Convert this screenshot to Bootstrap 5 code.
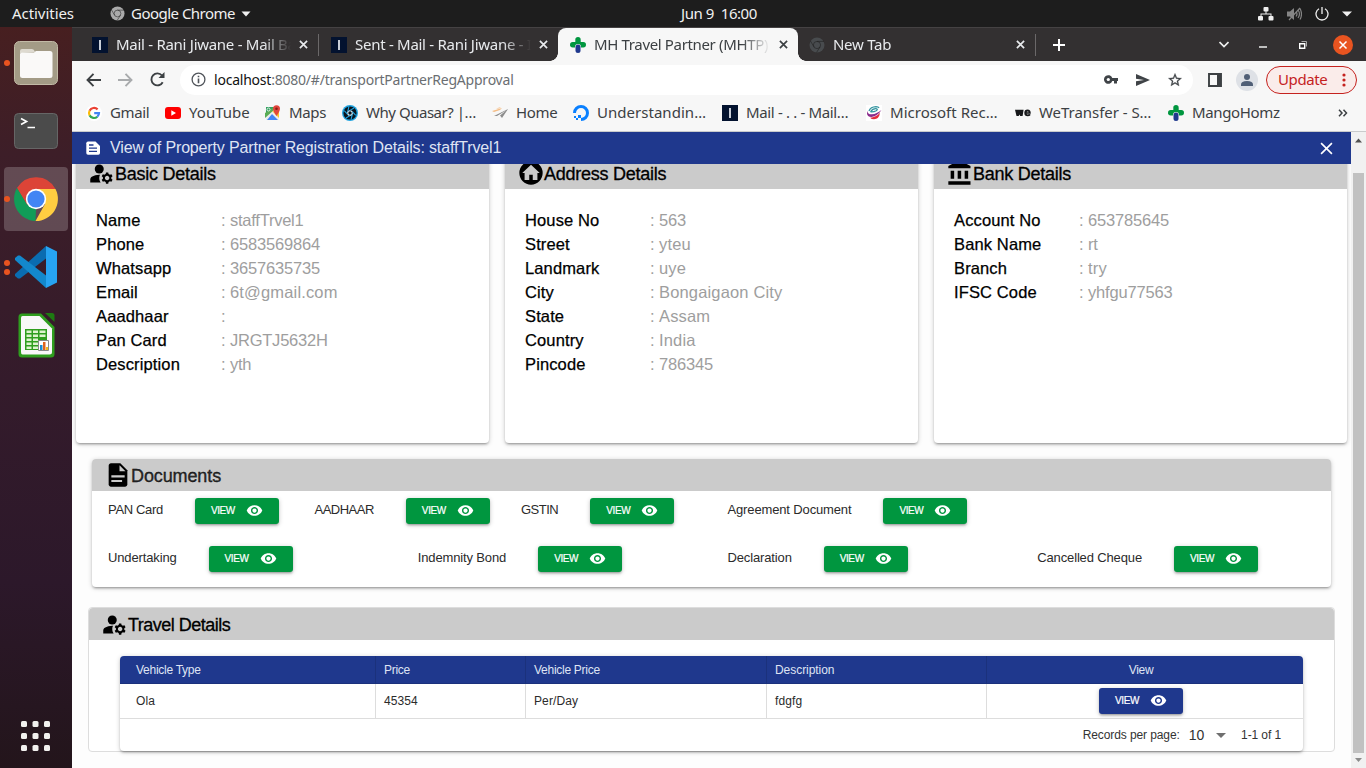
<!DOCTYPE html>
<html lang="en">
<head>
<meta charset="utf-8">
<meta name="viewport" content="width=device-width, initial-scale=1">
<title>MH Travel Partner (MHTP)</title>
<link href="https://cdn.jsdelivr.net/npm/bootstrap@5.3.0/dist/css/bootstrap.min.css" rel="stylesheet">
<style>
:root{--navy:#1f388d;--leaf:#00963f;--shade:#cbcbcb}
body{height:768px;overflow:hidden;background:#fff;font-family:"Liberation Sans",Arial,sans-serif;color:#000}
svg{display:block;flex:none}
.shell-font{font-family:"Noto Sans","Open Sans",sans-serif}
/* desktop bar */
.desk-bar{height:27px;background:#1d1d1d;color:#f0f0f0;font-size:15px;line-height:27px;display:grid;grid-template-columns:98px 583px 1fr auto;padding-left:12px}
.desk-bar>div:nth-child(1){letter-spacing:-.05px}
.desk-bar>div:nth-child(2){letter-spacing:-.52px}
.clock{letter-spacing:-.45px;white-space:pre;margin-left:-12px}
.tray{gap:13px;padding-right:14px}
/* dock */
.dock{width:72px;background:linear-gradient(#471f20 0,#3d1e28 17%,#341b2b 48%,#2c182a 75%,#23151b 100%);padding:4px 4px 0}
.dock-item{width:64px;height:64px;margin-bottom:4px;position:relative;border-radius:4px}
.dock-item.running{background:rgba(255,255,255,.2)}
.dots{position:absolute;left:0;top:0;height:64px;gap:3px}
.dots i{display:block;width:6px;height:6px;border-radius:50%;background:#e95420}
/* browser chrome */
.tab-strip{height:34px;background:#333031;border-top:1px solid #454243;color:#e8eaed;font-size:15px;padding-left:8px}
.b-tab{width:239px;height:33px;padding:0 6px 0 12px;position:relative}
.b-tab .ttl{width:176px;white-space:nowrap;overflow:hidden;-webkit-mask-image:linear-gradient(90deg,#000 84%,transparent 100%);mask-image:linear-gradient(90deg,#000 84%,transparent 100%);letter-spacing:-.28px}
.b-tab.current{background:#f7f7f7;color:#3c4043;border-radius:8px 8px 0 0;width:240px;margin-right:-1px}
.b-tab.current:before,.b-tab.current:after{content:"";position:absolute;bottom:0;width:8px;height:8px}
.b-tab.current:before{left:-8px;background:radial-gradient(circle at 0 0,transparent 7.5px,#f7f7f7 8px)}
.b-tab.current:after{right:-8px;background:radial-gradient(circle at 100% 0,transparent 7.5px,#f7f7f7 8px)}
.b-tab.current .ttl{letter-spacing:-.35px}
.divided{border-right:1px solid #5f5c5d;border-image:linear-gradient(transparent 7px,#6b6869 7px,#6b6869 27px,transparent 27px) 1}
.win-ctl{padding-right:13px}
.toolbar{height:37px;background:#f7f7f7;padding-left:14px}
.omni{width:1013px;height:30px;border-radius:15px;background:#fff;font-size:14px;color:#6a6e72;letter-spacing:-.22px;padding:0 7px 0 11px;margin-left:15px}
.omni b{font-weight:400;color:#111}
.upd{width:91px;height:28px;border:1px solid #c5221f;border-radius:14px;background:#faecea;color:#c5221f;font-size:15px;letter-spacing:-.4px;margin-left:8px;padding-left:11px}
.marks{height:34px;background:#f7f7f7;border-bottom:1px solid #c9cbcc;color:#3c4043;font-size:15px;display:grid;padding:0 0 4px 14px;grid-template-columns:79px 100px 77px 150px 81px 149px 144px 149px 153px 165px auto;align-items:center;white-space:nowrap}
.marks>div{display:flex;align-items:center;gap:8px;letter-spacing:-.35px}
.marks svg{margin-top:1px}
.marks .wide{letter-spacing:.03px}
/* dialog page */
.page{width:1279px}
.dlg-bar{height:32px;background:var(--navy);color:#dfe4f3;font-size:16px;padding:0 18px 0 13px}
.dlg-bar .ttl{letter-spacing:-.15px;margin-left:9px}
.scroll-body{height:604px;overflow:hidden;background:#fdfdfd}
.panel{background:#fff;border-radius:4px;box-shadow:0 1px 5px rgba(0,0,0,.2),0 2px 2px rgba(0,0,0,.14),0 3px 1px -2px rgba(0,0,0,.12)}
.info{height:286px}
.top-cards{padding:0 4px;gap:16px;margin-top:-7px}
.cap{height:32px;background:var(--shade);border-radius:4px 4px 0 0;padding-left:12px;font-size:18px;letter-spacing:-.25px;-webkit-text-stroke:.3px #000;line-height:32px}
.cap span{margin-left:-1px;padding-top:1px}
.facts{display:grid;grid-template-columns:125px 9px 1fr;font-size:16.5px;line-height:24px;padding:19px 20px 0;margin:0;color:#9e9e9e}
.facts dt{font-weight:400;color:#000;letter-spacing:.13px;-webkit-text-stroke:.25px #000}
.facts dd{margin:0;letter-spacing:-.24px}
.facts .sp{letter-spacing:.16px}
.facts .num{letter-spacing:-.18px}
.docs{margin:16px 20px 0;height:128px;font-size:13px;color:#2b2b2b}
.docs .row{height:48px;padding:7px 0 0}
.docs .row>div{gap:32px;padding:0 0 0 16px;display:flex;white-space:nowrap;letter-spacing:-.14px;line-height:24px}
.docs .tight{letter-spacing:-.5px}
.docs .snug{letter-spacing:-.33px}
.btn.vw{width:84px;height:26px;padding:0 0 0 16px;border:0;border-radius:3px;font-size:10px;line-height:26px;letter-spacing:-.4px;color:#fff;background:var(--leaf);display:flex;align-items:center;-webkit-text-stroke:.2px #fff;box-shadow:0 1px 5px rgba(0,0,0,.2),0 2px 2px rgba(0,0,0,.14),0 3px 1px -2px rgba(0,0,0,.12)}
.btn.vw svg{margin:-1px 0 0 11px}
.btn.vw.navy{background:var(--navy)}
.travel{margin:20px 16px 0;height:145px;border:1px solid #ddd;border-radius:4px;background:#fff}
.travel .cap{letter-spacing:-.5px}
.grid-box{margin:16px 31px 0;height:95px}
.grid-box table{width:100%;table-layout:fixed;border-collapse:separate;border-spacing:0;font-size:12px;color:#2b2b2b}
.grid-box th{height:28px;background:var(--navy);color:#dfe4f3;font-weight:400;padding:0 8px;letter-spacing:-.27px;border-right:1px solid #1b317c;border-bottom:1px solid #1b317c}
.grid-box td{height:35px;padding:0 8px;border-right:1px solid #ddd;border-bottom:1px solid #ddd;letter-spacing:.1px}
.grid-box th:nth-child(4){letter-spacing:-.05px}
.grid-box tr>:first-child{padding-left:16px}
.grid-box tr>:last-child{border-right:0;padding-right:16px}
.grid-box th:first-child{border-radius:4px 0 0 0}
.grid-box th:last-child{border-radius:0 4px 0 0}
.pager{height:32px;font-size:12px;color:#333;padding-right:22px;letter-spacing:-.1px}
.pager .count{font-size:14px;margin-left:9px}
.sbar{width:15px;background:#f1f1f1}
.sbar .thumb{width:11px;height:580px;background:#c1c1c1}
</style>
</head>
<body class="d-flex flex-column">
<svg width="0" height="0" class="position-absolute">
<defs>
<symbol id="eye" viewBox="0 0 24 24"><path d="M12 4.500C7 4.500 2.730 7.610 1 12c1.730 4.390 6 7.500 11 7.500s9.270-3.110 11-7.500c-1.730-4.390-6-7.500-11-7.500zM12 17c-2.760 0-5-2.240-5-5s2.240-5 5-5 5 2.240 5 5-2.240 5-5 5zm0-8c-1.660 0-3 1.340-3 3s1.340 3 3 3 3-1.340 3-3-1.340-3-3-3z"/></symbol>
<symbol id="manage" viewBox="0 0 24 24"><circle cx="10" cy="8" r="4"/><path d="M10.670 13.020C10.450 13.010 10.230 13 10 13c-2.420 0-4.680.670-6.610 1.820C2.510 15.340 2 16.320 2 17.350V20h9.260C10.470 18.870 10 17.490 10 16c0-1.070.250-2.070.670-2.980z"/><path d="M20.750 16c0-.220-.030-.420-.060-.630l1.140-1.010-1-1.730-1.450.490c-.320-.270-.680-.480-1.080-.630L18 11h-2l-.300 1.490c-.400.150-.760.360-1.080.630l-1.450-.490-1 1.730 1.140 1.010c-.030.210-.060.410-.060.630s.030.420.060.630l-1.140 1.010 1 1.730 1.450-.490c.320.270.680.480 1.080.630L16 21h2l.300-1.490c.400-.150.760-.360 1.080-.630l1.450.490 1-1.730-1.140-1.010c.030-.210.060-.410.060-.630zM17 18c-1.100 0-2-.900-2-2s.900-2 2-2 2 .900 2 2-.900 2-2 2z"/></symbol>
<symbol id="home" viewBox="0 0 24 24"><path fill-rule="evenodd" d="M12 2a10 10 0 1 0 0 20 10 10 0 0 0 0-20zM12 5l7.500 7H17.500v6h-4v-4.500h-3V18h-4v-6H4.500z"/></symbol>
<symbol id="bank" viewBox="0 0 24 24"><path d="M4 10v7h3v-7H4zm6 0v7h3v-7h-3zM2 22h19v-3H2v3zm14-12v7h3v-7h-3zm-4.500-9L2 6v2h19V6l-9.500-5z"/></symbol>
<symbol id="file" viewBox="0 0 24 24"><path d="M14 2H6c-1.100 0-2 .900-2 2v16c0 1.100.900 2 2 2h12c1.100 0 2-.900 2-2V8l-6-6z"/><path d="M13.300 3.600V8.700H18.400zM6.300 12.200h11.400v1.900H6.300zM6.300 16.200h9.200v1.900H6.300z" fill="#cbcbcb"/></symbol>
<symbol id="close" viewBox="0 0 10 10"><path d="M1 1l8 8M9 1L1 9" fill="none" stroke="currentColor" stroke-width="1.900"/></symbol>
<symbol id="mango" viewBox="0 0 16 16"><rect x="5.300" y="0" width="5.400" height="9" rx="2.700" fill="#00963f"/><rect x="0" y="5" width="16" height="5.400" rx="2.700" fill="#00963f"/><rect x="5" y="7" width="6" height="9" rx="3" fill="#f7f7f7"/><rect x="5.500" y="7.600" width="5" height="8.400" rx="2.500" fill="#1f388d"/></symbol>
<symbol id="ionos" viewBox="0 0 16 16"><path fill="#03122f" d="M0 0h16v16H0z"/><path fill="#c9ced8" d="M7 3h2v10H7z"/></symbol>
<symbol id="chrome-mono" viewBox="0 0 16 16"><circle cx="8" cy="8" r="7.500" fill="currentColor"/><g fill="none" stroke="#1d1d1d" stroke-opacity=".55" stroke-width="1"><circle cx="8" cy="8" r="3.600"/><path d="M8 4.400h7M4.900 9.800L1.500 4M11.100 9.800L7.600 15.400"/></g></symbol>
</defs>
</svg>

<header class="desk-bar shell-font">
  <div>Activities</div>
  <div class="d-flex align-items-center"><svg width="15" height="15" style="color:#aaa;margin-right:6px"><use href="#chrome-mono"/></svg>Google Chrome<svg width="10" height="6" style="margin-left:6px"><path d="M.5.500h9L5 5.500z" fill="#f0f0f0"/></svg></div>
  <div class="clock">Jun 9  16:00</div>
  <div class="tray d-flex align-items-center">
    <svg width="16" height="14" viewBox="0 0 16 14" fill="#f0f0f0"><rect x="5.500" width="5" height="4.500" rx="1"/><rect y="9" width="5" height="4.500" rx="1"/><rect x="10.500" y="9" width="5" height="4.500" rx="1"/><path d="M7.500 4h1v2.500h5V9h-1V7.500h-9V9h-1V6.500h5z"/></svg>
    <svg width="15" height="14" viewBox="0 0 15 14" fill="#858585"><path d="M0 4.500h3L7 1v12L3 9.500H0z"/><path d="M9 4.500q2 2.500 0 5M11 3q3 4 0 8M13 1.500q3 5.500 0 11M2 13L13 1" fill="none" stroke="#858585" stroke-width="1.200"/></svg>
    <svg width="14" height="14" viewBox="0 0 14 14" fill="none" stroke="#f0f0f0" stroke-width="1.300"><path d="M4 1.800a6 6 0 1 0 6 0M7 0v7"/></svg>
    <svg width="10" height="6"><path d="M0 .5h10L5 5.500z" fill="#f0f0f0"/></svg>
  </div>
</header>

<div class="d-flex flex-grow-1">
<aside class="dock d-flex flex-column">
  <div class="dock-item d-flex align-items-center justify-content-center"><div class="dots d-flex flex-column justify-content-center"><i></i></div>
    <svg width="44" height="44" viewBox="0 0 44 44"><rect x=".500" y=".500" width="43" height="43" rx="5" fill="#a39b86" stroke="#c2baa6"/><path d="M6 12V10q0-2 2-2h10q2 0 3 3h-1z" fill="#dedad0"/><path d="M6 36.500V13q0-1.500 2-1.500h12l2-1.500h14q2.500 0 2.500 2.500v22q0 2.500-2.500 2.500H8.500Q6 37 6 34.500z" fill="#faf9f8"/></svg></div>
  <div class="dock-item d-flex align-items-center justify-content-center">
    <svg width="44" height="36" viewBox="0 0 44 36"><rect x=".500" y=".500" width="43" height="35" rx="4" fill="#4b4b4b" stroke="#666"/><path d="M7 5.500l5.500 3-5.500 3M13.500 14.500H21" fill="none" stroke="#fff" stroke-width="1.700"/></svg></div>
  <div class="dock-item running d-flex align-items-center justify-content-center"><div class="dots d-flex flex-column justify-content-center"><i></i></div>
    <svg width="44" height="44" viewBox="0 0 44 44"><path d="M3 11A22 22 0 0 1 41.500 12H22L13 28z" fill="#dc4437"/><path d="M3 11L13 27.500 22 32 21.500 44A22 22 0 0 1 3 11z" fill="#119d58"/><path d="M41.500 12H22L31 27 21.500 44A22 22 0 0 0 41.500 12z" fill="#ffcd41"/><circle cx="22" cy="22" r="10.200" fill="#fff"/><circle cx="22" cy="22" r="8.600" fill="#4285f4"/></svg></div>
  <div class="dock-item d-flex align-items-center justify-content-center"><div class="dots d-flex flex-column justify-content-center"><i></i><i></i></div>
    <svg width="42" height="42" viewBox="0 0 42 42"><path d="M31 0L0 28q-.500 1 0 2l3 2.500h2L33 11z" fill="#0a6cb0"/><path d="M31 42L0 14q-.500-1 0-2l3-2.500h2L33 31z" fill="#1388cc"/><path d="M31 0l11 5.500v31L31 42z" fill="#27a4f2"/></svg></div>
  <div class="dock-item d-flex align-items-center justify-content-center">
    <svg width="37" height="45" viewBox="0 0 37 45"><path d="M4 .5h19L36.500 14v27q0 3.500-3.500 3.500H4Q.5 44.500.5 41V4Q.5.500 4 .500z" fill="#2f9e1e"/><path d="M4.500 3h17L34 15.500V39q0 2.500-2.500 2.500h-27Q3 41.500 3 39V5q0-2 1.500-2z" fill="#f8f8f8"/><path d="M27 0h7q2.500 0 2.500 2.500V9z" fill="#1e7a12"/><path d="M7 16h22v21H7z" fill="#2f9e1e"/><path d="M8.500 17.500h5v2.500h-5zm6.500 0h5v2.500h-5zm6.500 0h6v2.500h-6zM8.500 21.500h5v2.500h-5zm6.500 0h5v2.500h-5zm6.500 0h6v2.500h-6zM8.500 25.500h5V28h-5zm6.500 0h5V28h-5zm-6.500 4h5V32h-5zm6.500 0h5V32h-5zm-6.500 4h5V36h-5zm6.500 0h5V36h-5z" fill="#ddf3cd"/><path d="M20.500 27.500h10v10h-10z" fill="#fff" stroke="#888"/><path d="M22 32h2.500v5H22z" fill="#1a8bd0"/><path d="M25 29h2.500v8H25z" fill="#e0641d"/><path d="M28 34h2v3h-2z" fill="#f1b81b"/></svg></div>
  <div class="mt-auto align-self-center pb-3"><svg width="32" height="31" viewBox="0 0 32 31" fill="#f2f1ef"><g id="r3"><rect x="1" width="6" height="6" rx="1.500"/><rect x="12.500" width="6" height="6" rx="1.500"/><rect x="24" width="6" height="6" rx="1.500"/></g><use href="#r3" y="12"/><use href="#r3" y="24"/></svg></div>
</aside>

<main class="d-flex flex-column flex-grow-1">
  <div class="tab-strip shell-font d-flex">
    <div class="b-tab divided d-flex align-items-center gap-2"><svg width="16" height="16"><use href="#ionos"/></svg><div class="ttl">Mail - Rani Jiwane - Mail Ba</div><svg width="9" height="9" class="ms-auto me-1"><use href="#close"/></svg></div>
    <div class="b-tab d-flex align-items-center gap-2"><svg width="16" height="16"><use href="#ionos"/></svg><div class="ttl">Sent - Mail - Rani Jiwane - I</div><svg width="9" height="9" class="ms-auto me-1"><use href="#close"/></svg></div>
    <div class="b-tab current d-flex align-items-center gap-2"><svg width="16" height="16"><use href="#mango"/></svg><div class="ttl">MH Travel Partner (MHTP)</div><svg width="9" height="9" class="ms-auto me-1"><use href="#close"/></svg></div>
    <div class="b-tab divided d-flex align-items-center gap-2"><svg width="16" height="16" style="color:#484b4e"><use href="#chrome-mono"/></svg><div class="ttl">New Tab</div><svg width="9" height="9" class="ms-auto me-1"><use href="#close"/></svg></div>
    <div class="d-flex align-items-center ps-3"><svg width="14" height="12" viewBox="0 0 14 12"><path d="M7 0v12M1 6h12" stroke="#fff" stroke-width="2"/></svg></div>
    <div class="win-ctl ms-auto d-flex align-items-center">
      <svg width="10" height="7" viewBox="0 0 10 7"><path d="M.5 1L5 5.500 9.500 1" fill="none" stroke="#eee" stroke-width="1.700"/></svg>
      <svg width="8" height="7" style="margin-left:30px"><path d="M0 6h8" stroke="#eee" stroke-width="1.500"/></svg>
      <svg width="8" height="8" viewBox="0 0 8 8" style="margin-left:32px"><path d="M.7 2.700h5v4.600h-5z" fill="none" stroke="#fff" stroke-width="1.400"/><path d="M2.500.5h5v5" fill="none" stroke="#aaa"/></svg>
      <svg width="20" height="20" viewBox="0 0 20 20" style="margin-left:26px"><circle cx="10" cy="10" r="10" fill="#e95420"/><path d="M6.500 6.500l7 7m0-7l-7 7" stroke="#fff" stroke-width="1.500"/></svg>
    </div>
  </div>
  <div class="toolbar shell-font d-flex align-items-center">
    <svg width="15" height="14" viewBox="0 0 15 14" fill="none" stroke="#3c4043" stroke-width="1.900"><path d="M7.500.800L1.500 7l6 6.200M1.500 7H15"/></svg>
    <svg width="15" height="14" viewBox="0 0 15 14" fill="none" stroke="#a9abad" stroke-width="1.900" style="margin-left:17px"><path d="M7.500.800L13.500 7l-6 6.200M13.500 7H0"/></svg>
    <svg width="15" height="15" viewBox="0 0 15 15" fill="none" stroke="#3c4043" stroke-width="1.900" style="margin-left:17px"><path d="M12.700 10.200a6 6 0 1 1-.7-6.700"/><path d="M14.500 0v6h-6z" fill="#3c4043" stroke="none"/></svg>
    <div class="omni d-flex align-items-center"><svg width="15" height="15" viewBox="0 0 15 15" class="me-2"><circle cx="7.500" cy="7.500" r="6.400" fill="none" stroke="#50545a" stroke-width="1.300"/><path d="M6.700 6.600h1.600v4.600H6.700zM6.700 3.700h1.600v1.600H6.700z" fill="#50545a"/></svg><span><b>localhost</b>:8080/#/transportPartnerRegApproval</span>
      <span class="ms-auto d-flex align-items-center" style="gap:17px;padding-right:3px">
      <svg width="15" height="9" viewBox="0 0 15 9"><path d="M14 3H8.300A4.300 4.300 0 1 0 8.300 6H10v2.500h3V6h1z" fill="#3f4347"/><circle cx="4.300" cy="4.500" r="1.600" fill="#fff"/></svg>
      <svg width="14" height="12" viewBox="0 0 14 12"><path d="M0 0l14 6-14 6V7.300L8 6 0 4.700z" fill="#3f4347"/></svg>
      <svg width="16" height="16" viewBox="0 0 24 24"><path d="M22 9.240l-7.190-.620L12 2 9.190 8.630 2 9.240l5.460 4.730L5.820 21 12 17.270 18.180 21l-1.630-7.030L22 9.240zM12 15.400l-3.760 2.270 1-4.280-3.320-2.880 4.380-.380L12 6.100l1.710 4.040 4.380.380-3.320 2.880 1 4.280L12 15.400z" fill="#3f4347" stroke="#3f4347" stroke-width=".4"/></svg></span></div>
    <svg width="14" height="14" viewBox="0 0 14 14" style="margin-left:15px"><path d="M1 1h12v12H1z" fill="none" stroke="#3c4043" stroke-width="1.900"/><path d="M9 1h4v12H9z" fill="#3c4043"/></svg>
    <svg width="22" height="22" viewBox="0 0 22 22" style="margin-left:14px"><circle cx="11" cy="11" r="11" fill="#dee1e6"/><circle cx="11" cy="8" r="3" fill="#505f76"/><path d="M5 17v-1.500q0-3.500 6-3.500t6 3.500V17z" fill="#505f76"/></svg>
    <div class="upd d-flex align-items-center">Update<svg width="4" height="14" viewBox="0 0 4 14" fill="#c5221f" style="margin-left:15px"><circle cx="2" cy="2" r="1.600"/><circle cx="2" cy="7" r="1.600"/><circle cx="2" cy="12" r="1.600"/></svg></div>
  </div>
  <nav class="marks shell-font">
    <div><svg width="16" height="16" viewBox="0 0 16 16" fill="none" stroke-width="2.200"><circle cx="8" cy="8" r="8" fill="#fff"/><path d="M11.600 4.400A5 5 0 0 0 3.600 5.700" stroke="#ea4335"/><path d="M3.600 5.700a5 5 0 0 0 0 4.700" stroke="#fbbc05"/><path d="M3.600 10.400a5 5 0 0 0 7.700 1.300" stroke="#34a853"/><path d="M11.300 11.700Q13 10.200 13 8.100H8.200" stroke="#4285f4"/></svg>Gmail</div>
    <div class="wide"><svg width="16" height="12" viewBox="0 0 16 12"><rect width="16" height="12" rx="3" fill="#f00"/><path d="M6.300 3.300v5.400L11 6z" fill="#fff"/></svg>YouTube</div>
    <div><svg width="16" height="16" viewBox="0 0 16 16"><path fill="#34a060" d="M1 2h10L1 12z"/><path d="M1 11l6-5 7 6v3H1z" fill="#ececec"/><path d="M2 15l5-6 6 6z" fill="#4285f4"/><path d="M0 8l9-6v3l-9 8z" fill="#5aac55"/><path d="M7 6l7 7V7z" fill="#fbc62e"/><path d="M11.500 11Q8 6 8 3.700a3.500 3.500 0 0 1 7 0Q15 6 11.500 11z" fill="#e0463c"/><circle cx="11.500" cy="3.800" r="1.300" fill="#8a1c18"/><circle cx="3.500" cy="4.500" r="1.500" fill="none" stroke="#fff" stroke-width=".8"/></svg>Maps</div>
    <div style="letter-spacing:-.47px"><svg width="16" height="16" viewBox="0 0 16 16"><circle cx="8" cy="8" r="8" fill="#1fa3e0"/><circle cx="8" cy="8" r="6.600" fill="#08141e"/><g fill="none" stroke="#1fa3e0" stroke-width="1.100"><circle cx="8" cy="8" r="2.300" stroke="#e8f5fb"/><path d="M8 5.400l4-2.400M10.300 6.700l3.500 3.600M10.300 9.300l-1.200 5M8 10.600L4 13M5.700 9.300L2.200 5.700M5.700 6.700l1.200-5"/></g></svg>Why Quasar? |…</div>
    <div><svg width="16" height="16" viewBox="0 0 16 16"><path d="M0 6l10-3-2 2-6 2zM4 3.500L9 2 7 3.500z" fill="#f5bd85"/><path d="M2 11L16 4l-6 9-2-2.500L14 5.500 5 11z" fill="#8d8d8d"/></svg>Home</div>
    <div class="wide"><svg width="16" height="16" viewBox="0 0 16 16"><path d="M8 14.500A6.500 6.500 0 1 0 1.500 8" fill="none" stroke="#0a80ff" stroke-width="3"/><path d="M5 10h3v3H5zM3 13h2v2H3zM1 11h2v2H1z" fill="#0a80ff"/></svg>Understandin…</div>
    <div><svg width="16" height="16"><use href="#ionos"/></svg>Mail - . . - Mail…</div>
    <div class="wide"><svg width="16" height="16" viewBox="0 0 16 16"><path fill="#fff" d="M0 0h16v16H0z"/><path d="M4.500 6.800Q6.500 3.600 10 3.700q2.500.4.200 2-2.500 1.400-5.700 1.100M3 6q1.500-4 7-4.300 2.500 0 3 1.300" fill="none" stroke="#3595a0" stroke-width="1.300"/><path d="M1.500 5.500Q1 9.500 6 9.300 10.500 9 15.500 5q-4 6-10 7Q-.5 12 1.500 5.500z" fill="#8a2a8b"/><path d="M4 12.700q6-.5 10-5-1 6.500-6 6.500-2.500 0-4-1.500z" fill="#e52b3d"/></svg>Microsoft Rec…</div>
    <div style="letter-spacing:-.04px"><svg width="16" height="16" viewBox="0 0 16 16"><path d="M0 4.700h8.600L7.600 11H5.200l-.7-1.500L3.700 11H1.500z" fill="#17181a"/><path d="M15.800 8.700h-4.300q.5.900 1.800.6l2-.3v1.500q-1 .7-2.500.7-3.500 0-3.500-3.300 0-3.400 3.300-3.400 3.200 0 3.200 4.200zM11.600 7.300h2.200q-.2-.9-1.100-.9t-1.100.9z" fill="#17181a"/></svg>WeTransfer - S…</div>
    <div><svg width="16" height="16"><use href="#mango"/></svg>MangoHomz</div>
    <div><svg width="10" height="8" viewBox="0 0 10 8" style="margin-left:5px"><path d="M1 .8L4 4 1 7.200M5.500.800l3 3.200-3 3.200" fill="none" stroke="#3c4043" stroke-width="1.500"/></svg></div>
  </nav>

  <div class="d-flex flex-grow-1">
    <section class="page">
      <div class="dlg-bar d-flex align-items-center">
        <svg width="16" height="16" viewBox="0 0 16 16"><path d="M3 1.500h7.500L15 6v7q0 1.700-1.700 1.700H3Q1.300 14.700 1.300 13V3.200Q1.300 1.500 3 1.500z" fill="#fff"/><path d="M4 5h4.500M4 8.200h8M4 11.300h8" stroke="#1f388d" stroke-width="1.300"/></svg>
        <span class="ttl">View of Property Partner Registration Details: staffTrvel1</span>
        <svg width="13" height="13" viewBox="0 0 12 12" class="ms-auto"><path d="M1 1l10 10M11 1L1 11" stroke="#fff" stroke-width="1.500"/></svg>
      </div>
      <div class="scroll-body">
        <div class="top-cards d-flex">
          <div class="panel info flex-fill w-100">
            <div class="cap d-flex align-items-center"><svg width="27" height="27"><use href="#manage"/></svg><span class="ms-0">Basic Details</span></div>
            <dl class="facts"><dt>Name</dt><dd>:</dd><dd>staffTrvel1</dd><dt>Phone</dt><dd>:</dd><dd class="num">6583569864</dd><dt>Whatsapp</dt><dd>:</dd><dd class="num">3657635735</dd><dt>Email</dt><dd>:</dd><dd class="sp">6t@gmail.com</dd><dt>Aaadhaar</dt><dd>:</dd><dd></dd><dt>Pan Card</dt><dd>:</dd><dd>JRGTJ5632H</dd><dt>Description</dt><dd>:</dd><dd>yth</dd></dl>
          </div>
          <div class="panel info flex-fill w-100">
            <div class="cap d-flex align-items-center"><svg width="28" height="28"><use href="#home"/></svg><span>Address Details</span></div>
            <dl class="facts"><dt>House No</dt><dd>:</dd><dd class="num">563</dd><dt>Street</dt><dd>:</dd><dd class="sp">yteu</dd><dt>Landmark</dt><dd>:</dd><dd class="sp">uye</dd><dt>City</dt><dd>:</dd><dd class="sp">Bongaigaon City</dd><dt>State</dt><dd>:</dd><dd class="sp">Assam</dd><dt>Country</dt><dd>:</dd><dd class="sp">India</dd><dt>Pincode</dt><dd>:</dd><dd class="num">786345</dd></dl>
          </div>
          <div class="panel info flex-fill w-100">
            <div class="cap d-flex align-items-center"><svg width="28" height="28"><use href="#bank"/></svg><span>Bank Details</span></div>
            <dl class="facts"><dt>Account No</dt><dd>:</dd><dd class="num">653785645</dd><dt>Bank Name</dt><dd>:</dd><dd>rt</dd><dt>Branch</dt><dd>:</dd><dd class="sp">try</dd><dt>IFSC Code</dt><dd>:</dd><dd class="num">yhfgu77563</dd></dl>
          </div>
        </div>

        <div class="panel docs">
          <div class="cap d-flex align-items-center" style="letter-spacing:-.11px"><svg width="28" height="28"><use href="#file"/></svg><span>Documents</span></div>
          <div class="row mx-0">
            <div class="col-2"><span class="snug">PAN Card</span><button class="btn vw">VIEW<svg width="17" height="17" fill="currentColor"><use href="#eye"/></svg></button></div>
            <div class="col-2"><span class="tight">AADHAAR</span><button class="btn vw">VIEW<svg width="17" height="17" fill="currentColor"><use href="#eye"/></svg></button></div>
            <div class="col-2"><span class="tight">GSTIN</span><button class="btn vw">VIEW<svg width="17" height="17" fill="currentColor"><use href="#eye"/></svg></button></div>
            <div class="col-3"><span>Agreement Document</span><button class="btn vw">VIEW<svg width="17" height="17" fill="currentColor"><use href="#eye"/></svg></button></div>
          </div>
          <div class="row mx-0">
            <div class="col-3"><span>Undertaking</span><button class="btn vw">VIEW<svg width="17" height="17" fill="currentColor"><use href="#eye"/></svg></button></div>
            <div class="col-3"><span>Indemnity Bond</span><button class="btn vw">VIEW<svg width="17" height="17" fill="currentColor"><use href="#eye"/></svg></button></div>
            <div class="col-3"><span>Declaration</span><button class="btn vw">VIEW<svg width="17" height="17" fill="currentColor"><use href="#eye"/></svg></button></div>
            <div class="col-3"><span>Cancelled Cheque</span><button class="btn vw">VIEW<svg width="17" height="17" fill="currentColor"><use href="#eye"/></svg></button></div>
          </div>
        </div>

        <div class="travel">
          <div class="cap d-flex align-items-center"><svg width="27" height="27"><use href="#manage"/></svg><span class="ms-0">Travel Details</span></div>
          <div class="panel grid-box">
            <table>
              <colgroup><col style="width:256px"><col style="width:150px"><col style="width:241px"><col style="width:220px"><col></colgroup>
              <thead><tr><th>Vehicle Type</th><th>Price</th><th>Vehicle Price</th><th>Description</th><th class="text-center">View</th></tr></thead>
              <tbody><tr><td>Ola</td><td>45354</td><td>Per/Day</td><td>fdgfg</td><td><button class="btn vw navy mx-auto">VIEW<svg width="17" height="17" fill="currentColor"><use href="#eye"/></svg></button></td></tr></tbody>
            </table>
            <div class="pager d-flex align-items-center justify-content-end"><span>Records per page:</span><span class="count">10</span><svg width="10" height="5" style="margin:0 15px 0 12px"><path d="M0 0h10L5 5z" fill="#6f6f6f"/></svg><span>1-1 of 1</span></div>
          </div>
        </div>
      </div>
    </section>
    <div class="sbar d-flex flex-column align-items-center">
      <svg width="15" height="41" viewBox="0 0 15 41"><path d="M4 10.500h7L7.500 6.500z" fill="#505050"/></svg>
      <div class="thumb"></div>
      <svg width="15" height="15"><path d="M4 5h7L7.500 9z" fill="#8b8b8b"/></svg>
    </div>
  </div>
</main>
</div>
<script src="https://cdn.jsdelivr.net/npm/bootstrap@5.3.0/dist/js/bootstrap.bundle.min.js"></script>
</body>
</html>
